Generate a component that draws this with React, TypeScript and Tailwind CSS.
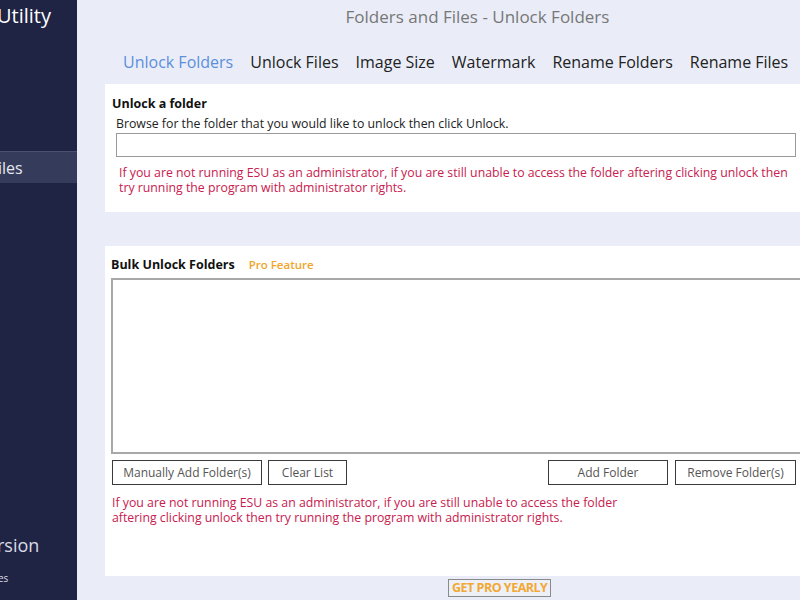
const Btn = ({ label, className = '' }: { label: string; className?: string }) => (
  <button
    className={`h-[25px] border-[1.5px] border-[#3a3a3a] bg-white text-[12px] text-[#555] ${className}`}
  >
    {label}
  </button>
);

const App = () => {
  const tabs = ['Unlock Files', 'Image Size', 'Watermark', 'Rename Folders', 'Rename Files'];

  return (
    <div
      className="flex h-[600px] w-[800px] overflow-hidden bg-[#eaedf8]"
      style={{ fontFamily: '"Open Sans", "Noto Sans", sans-serif' }}
    >
      {/* sidebar */}
      <div className="flex w-[77px] shrink-0 flex-col overflow-hidden bg-[#202444] text-white">
        <div className="mt-[1px] -ml-[3px] whitespace-nowrap text-[20px] leading-[30px]">Utility</div>
        <div className="mt-[120px] flex h-[32px] items-center border-t border-[#4a5070] bg-[#353b5b] -ml-[2px] text-[16px] text-[#e6e8f0]">
          iles
        </div>
        <div className="flex-1" />
        <div className="-ml-[3px] text-[18px] leading-[24px] text-[#d8dbe6]">rsion</div>
        <div className="mt-[14px] mb-[14px] -ml-[2px] text-[10px] text-[#d8dbe6]">es</div>
      </div>

      {/* main */}
      <div className="flex min-w-0 flex-1 flex-col pl-[28px]">
        <div className="mt-[5px] ml-[50px] text-center text-[17px] leading-[24px] text-[#777]">
          Folders and Files - Unlock Folders
        </div>
        <div className="mt-[21px] ml-[18px] flex gap-[17px] whitespace-nowrap text-[16px] leading-[24px] text-[#222]">
          <span className="text-[#5b8fdc]">Unlock Folders</span>
          {tabs.map((t) => (
            <span key={t}>{t}</span>
          ))}
        </div>

        {/* unlock a folder */}
        <div className="mt-[10px] h-[128px] bg-white pl-[7px] pr-[4px]">
          <div className="pt-[12px] text-[12.5px] font-bold leading-[16px] text-[#111]">Unlock a folder</div>
          <div className="mt-[4px] pl-[4px] text-[12.3px] leading-[15px] text-[#222]">
            Browse for the folder that you would like to unlock then click Unlock.
          </div>
          <div className="mt-[2px] ml-[4px] h-[24px] border border-[#9a9a9a] bg-white" />
          <div className="mt-[8px] pl-[7px] pr-[4px] text-[12.3px] leading-[15px] text-[#c8204e]">
            If you are not running ESU as an administrator, if you are still unable to access the folder aftering clicking unlock then try running the program with administrator rights.
          </div>
        </div>

        {/* bulk unlock */}
        <div className="mt-[34px] h-[330px] bg-white pl-[6px]">
          <div className="flex items-baseline gap-[14px] pt-[10px]">
            <span className="text-[12.5px] font-bold leading-[16px] text-[#111]">Bulk Unlock Folders</span>
            <span className="text-[11.5px] font-semibold text-[#f0a52a]">Pro Feature</span>
          </div>
          <div className="mt-[5px] -mr-[10px] h-[176px] border-2 border-[#a8a8a8] bg-white" />
          <div className="mt-[6px] flex items-center pl-[1px] pr-[4px]">
            <Btn label="Manually Add Folder(s)" className="w-[150px]" />
            <Btn label="Clear List" className="ml-[6px] w-[79px]" />
            <div className="flex-1" />
            <Btn label="Add Folder" className="w-[120px]" />
            <Btn label="Remove Folder(s)" className="ml-[7px] w-[121px]" />
          </div>
          <div className="mt-[10px] w-[515px] pl-[1px] text-[12.3px] leading-[15px] text-[#c8204e]">
            If you are not running ESU as an administrator, if you are still unable to access the folder aftering clicking unlock then try running the program with administrator rights.
          </div>
        </div>

        <div className="flex flex-1 items-center pl-[343px]">
          <button className="h-[18px] border-[1.5px] border-[#8a8a8a] bg-[#eef0f8] px-[3px] text-[12.5px] font-bold leading-[14px] tracking-[-0.5px] text-[#f2a832]">
            GET PRO YEARLY
          </button>
        </div>
      </div>
    </div>
  );
};

export default App;
